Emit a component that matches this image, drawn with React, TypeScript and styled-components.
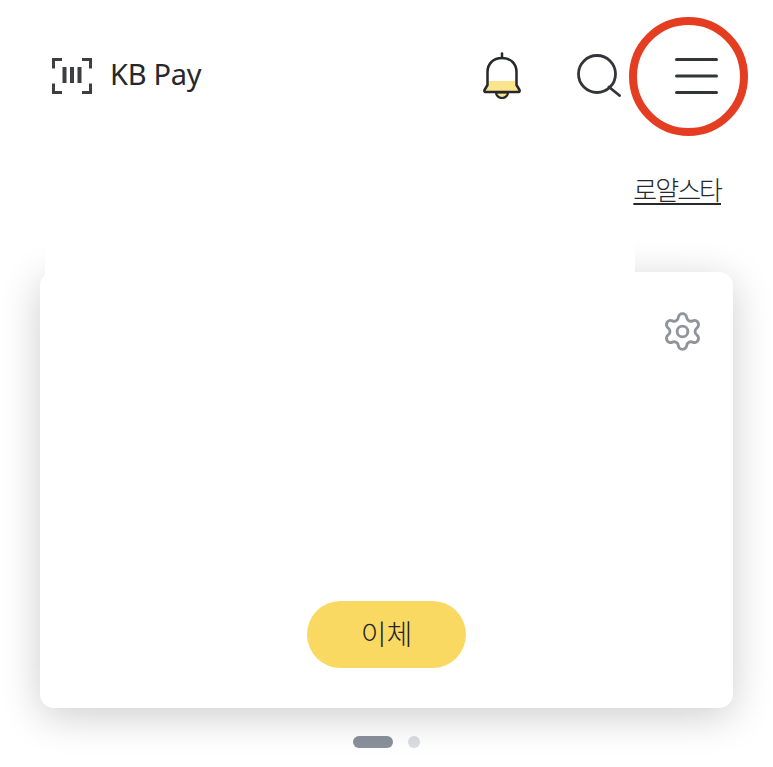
import React from 'react';
import styled, { createGlobalStyle } from 'styled-components';
import { Settings } from 'lucide-react';

const GlobalStyle = createGlobalStyle`
  html, body {
    margin: 0;
    padding: 0;
    background: #fff;
    font-family: "Noto Sans CJK KR", "Noto Sans", sans-serif;
  }
`;

const Page = styled.div`
  width: 773px;
  height: 767px;
  overflow: hidden;
  background: #fff;
  display: flex;
  flex-direction: column;
`;

const Header = styled.header`
  height: 151px;
  flex-shrink: 0;
  display: flex;
  align-items: center;
  justify-content: space-between;
  padding: 0 24px 0 52px;
  box-sizing: border-box;
`;

const Brand = styled.div`
  display: flex;
  align-items: center;
  gap: 18px;
`;

const BrandName = styled.span`
  font-family: "Noto Sans", sans-serif;
  font-size: 29px;
  color: #26282c;
  letter-spacing: -0.3px;
  margin-bottom: 5px;
`;

const Actions = styled.div`
  display: flex;
  align-items: center;
`;

const IconButton = styled.div<{ $width: number; $gap?: number; $shift?: number }>`
  width: ${(p) => p.$width}px;
  height: 117px;
  margin-right: ${(p) => p.$gap ?? 0}px;
  padding-left: ${(p) => p.$shift ?? 0}px;
  box-sizing: border-box;
  position: relative;
  display: flex;
  align-items: center;
  justify-content: center;
`;

const Ring = styled.div`
  position: absolute;
  left: 0;
  top: 0;
  width: 119px;
  height: 119px;
  box-sizing: border-box;
  border: 8.5px solid #e43d22;
  border-radius: 50%;
`;

const SubRow = styled.div`
  height: 121px;
  flex-shrink: 0;
  box-sizing: border-box;
  display: flex;
  justify-content: flex-end;
  align-items: flex-start;
  padding: 18px 52px 0 0;
`;

const GradeLink = styled.a`
  font-size: 26px;
  font-weight: 300;
  line-height: 40px;
  height: 40px;
  color: #26282c;
  text-decoration: underline;
  text-underline-offset: 3px;
  text-decoration-thickness: 2px;
  letter-spacing: -2px;
`;

const Card = styled.section`
  position: relative;
  margin: 0 40px;
  width: 693px;
  height: 436px;
  flex-shrink: 0;
  box-sizing: border-box;
  background: #fff;
  border-radius: 14px;
  box-shadow: 0 8px 40px rgba(0, 0, 0, 0.2);
  display: flex;
  flex-direction: column;
  align-items: center;
  justify-content: space-between;
  padding: 38px 29px 40px;
`;

/* white strip over the top of the card shadow */
const ShadowCover = styled.div`
  position: absolute;
  left: 5px;
  top: -52px;
  width: 590px;
  height: 56px;
  background: #fff;
`;

const CardTop = styled.div`
  width: 100%;
  display: flex;
  justify-content: flex-end;
  color: #8e939c;
`;

const TransferButton = styled.button`
  width: 159px;
  height: 67px;
  border: 0;
  border-radius: 34px;
  background: #fad962;
  color: #222428;
  font-family: inherit;
  font-size: 28px;
  font-weight: 300;
  padding: 0 0 3px;
`;

const Pager = styled.div`
  display: flex;
  justify-content: center;
  align-items: center;
  gap: 15px;
  margin-top: 28px;
`;

const Dot = styled.span<{ $active?: boolean }>`
  display: block;
  height: 12px;
  width: ${(p) => (p.$active ? 40 : 12)}px;
  border-radius: 6px;
  background: ${(p) => (p.$active ? '#8a909c' : '#dadde2')};
`;

function ScanIcon() {
  return (
    <svg width="40" height="36" viewBox="0 0 40 36" fill="none" stroke="#3c3e42" strokeWidth="3">
      <path d="M10 1.5H1.500v9M30 1.500h8.500v9M1.500 25.500v9H10M38.500 25.500v9H30" />
      <path d="M12.500 9v16M20 9v16M27.500 9v16" strokeWidth="4" />
    </svg>
  );
}

function BellIcon() {
  return (
    <svg width="38" height="47" viewBox="0 0 38 47" fill="none">
      <path d="M5 29h28v5l3 5H2l3-5z" fill="#fbe48a" />
      <path d="M13 40.500a6 5.500 0 0 0 12 0z" fill="#fbe48a" stroke="#26282c" strokeWidth="2.200" />
      <path
        d="M19 6C10 6 4.500 12 4.500 20v13l-3 5c-.5 1 0 2 1 2h33c1 0 1.500-1 1-2l-3-5V20C33.500 12 28 6 19 6z"
        stroke="#26282c"
        strokeWidth="2.500"
        strokeLinejoin="round"
      />
      <path d="M19 1.500V6" stroke="#26282c" strokeWidth="2.500" strokeLinecap="round" />
    </svg>
  );
}

function SearchIcon() {
  return (
    <svg width="44" height="43" viewBox="0 0 44 43" fill="none" stroke="#333539" strokeWidth="2.800" strokeLinecap="round">
      <circle cx="20" cy="20" r="18.500" />
      <path d="M32 33l10.500 8.500" />
    </svg>
  );
}

function MenuIcon() {
  return (
    <svg width="43" height="36" viewBox="0 0 43 36" fill="none" stroke="#333539" strokeWidth="3" strokeLinecap="round">
      <path d="M1.500 1.500h40M1.500 18h40M1.500 34.500h40" />
    </svg>
  );
}

export default function App() {
  return (
    <Page>
      <GlobalStyle />
      <Header>
        <Brand>
          <ScanIcon />
          <BrandName>KB Pay</BrandName>
        </Brand>
        <Actions>
          <IconButton $width={60} $gap={37}>
            <BellIcon />
          </IconButton>
          <IconButton $width={60}>
            <SearchIcon />
          </IconButton>
          <IconButton $width={120} $shift={15}>
            <Ring />
            <MenuIcon />
          </IconButton>
        </Actions>
      </Header>
      <SubRow>
        <GradeLink>로얄스타</GradeLink>
      </SubRow>
      <Card>
        <ShadowCover />
        <CardTop>
          <Settings size={43} strokeWidth={1.6} />
        </CardTop>
        <TransferButton>이체</TransferButton>
      </Card>
      <Pager>
        <Dot $active />
        <Dot />
      </Pager>
    </Page>
  );
}
